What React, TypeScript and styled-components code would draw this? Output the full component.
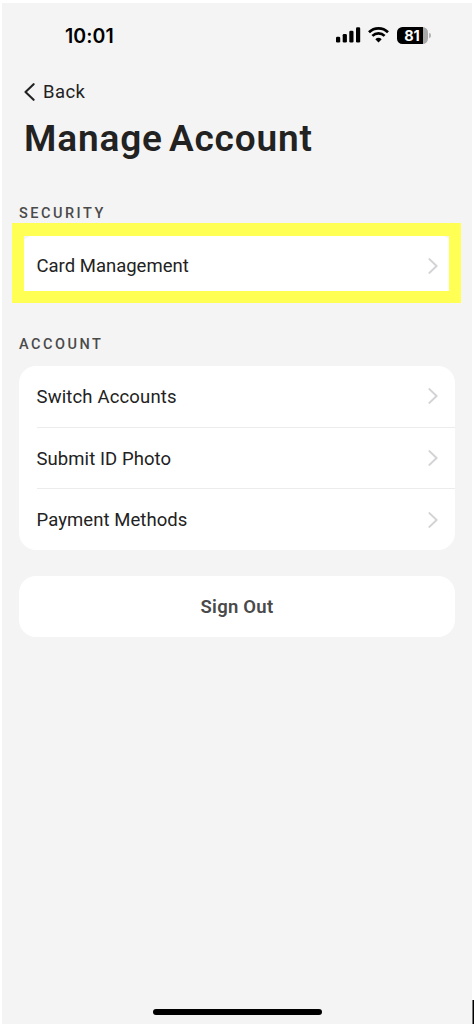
import React from 'react';
import styled, { createGlobalStyle } from 'styled-components';

const GlobalStyle = createGlobalStyle`
  * { box-sizing: border-box; }
  body { margin: 0; background: #fff; font-family: Roboto, "Liberation Sans", sans-serif; }
  button, h1, h2 { margin: 0; font: inherit; }
`;

const Page = styled.div`
  height: 1024px;
  padding: 3px 2px 0;
  background: #fff;
  position: relative;
  overflow: hidden;
`;

const Screen = styled.main`
  height: 1021px;
  background: #f4f4f4;
  display: flex;
  flex-direction: column;
`;

const StatusBar = styled.header`
  height: 64px;
  padding: 0 41px 0 63px;
  display: flex;
  align-items: center;
  justify-content: space-between;
  color: #000;
`;

const Time = styled.time`
  font: 600 19.5px/24px Inter, sans-serif;
  letter-spacing: 0.05px;
  padding-top: 1px;
`;

const StatusIcons = styled.div`
  display: flex;
  align-items: center;
`;

const Battery = styled.div`
  display: flex;
  align-items: center;
  margin-left: 8px;
`;

const BatteryBody = styled.div`
  width: 31px;
  height: 17px;
  padding-right: 1px;
  border-radius: 5.5px;
  background: linear-gradient(to right, #000 25.5px, #a9a9a9 25.5px);
  color: #fff;
  font: 700 14.5px/17px Inter, sans-serif;
  text-align: center;
`;

const BatteryTip = styled.div`
  width: 2px;
  height: 5px;
  margin-left: 1px;
  border-radius: 0 2px 2px 0;
  background: #b4b4b4;
`;

const BackButton = styled.button`
  align-self: flex-start;
  height: 30px;
  margin-top: 10px;
  padding: 0 0 0 22px;
  border: 0;
  background: none;
  display: flex;
  align-items: center;
  gap: 8px;
  color: #222;
  font-size: 18.5px;
  letter-spacing: 0.45px;
`;

const Title = styled.h1`
  height: 44px;
  margin-top: 10px;
  padding-left: 22px;
  color: #222;
  font-size: 37px;
  font-weight: 600;
  line-height: 44px;
  letter-spacing: 0.85px;
  word-spacing: -4px;
  white-space: nowrap;
`;

const Section = styled.section<{ $top: number }>`
  margin: ${({ $top }) => $top}px 17px 0;
`;

const SectionTitle = styled.h2`
  height: 20px;
  color: #4a4a4a;
  font-size: 14.5px;
  font-weight: 500;
  line-height: 20px;
  letter-spacing: 2.5px;
`;

const Card = styled.div`
  position: relative;
  margin-top: 11px;
  border-radius: 17px;
  background: #fff;
`;

const Highlight = styled.div`
  position: absolute;
  inset: -12px -6px -7px -7.5px;
  border: 12.5px solid #ffff54;
  border-top-width: 13px;
  pointer-events: none;
`;

const Row = styled.div`
  height: 61.33px;
  padding: 0 17px 0 0;
  margin-left: 17.5px;
  display: flex;
  align-items: center;
  justify-content: space-between;
  color: #222;
  font-size: 18.5px;
  & + & { border-top: 1px solid #ececec; }
`;

const Label = styled.span<{ $spacing: number }>`
  padding-top: 1px;
  letter-spacing: ${({ $spacing }) => $spacing}px;
`;

const SignOut = styled.button`
  height: 61.5px;
  margin: 26px 17px 0;
  padding: 1px 0 0;
  border: 0;
  border-radius: 17px;
  background: #fff;
  color: #4a4a4a;
  font-size: 18.5px;
  font-weight: 600;
  letter-spacing: 0.25px;
`;

const HomeIndicator = styled.div`
  width: 169px;
  height: 6px;
  margin: auto auto 9px;
  border-radius: 3px;
  background: #000;
`;

const EdgeMark = styled.div`
  position: absolute;
  right: 0;
  bottom: 0;
  width: 2px;
  height: 24px;
  background: linear-gradient(to right, #777 1px, #000 1px);
`;

const Chevron = () => (
  <svg width="10" height="16" viewBox="0 0 10 16" fill="none" stroke="#d3d3d6" strokeWidth="2" strokeLinecap="round" strokeLinejoin="round">
    <path d="M1.4 1.1 8.6 8 1.4 14.9" />
  </svg>
);

const Signal = () => (
  <svg width="25" height="16" viewBox="0 0 25 16">
    <rect x="0" y="9.8" width="4.2" height="5.7" rx="1.3" />
    <rect x="6.7" y="7" width="4.2" height="8.5" rx="1.3" />
    <rect x="13.3" y="3.8" width="4.2" height="11.7" rx="1.3" />
    <rect x="20" y="0.3" width="4.2" height="15.2" rx="1.3" />
  </svg>
);

const WifiIcon = styled.svg`
  margin-left: 7px;
`;

const Wifi = () => (
  <WifiIcon width="21" height="16" viewBox="0 0 21 16" fill="none" stroke="#000" strokeWidth="2.7">
    <path d="M1 5.3a13.6 13.6 0 0 1 19 0" />
    <path d="M4.4 8.9a8.8 8.8 0 0 1 12.2 0" />
    <path d="M10.5 15.5 7.3 12.3a4.7 4.7 0 0 1 6.4 0z" fill="#000" stroke="none" />
  </WifiIcon>
);

const accountRows = [
  { label: 'Switch Accounts', spacing: 0.15 },
  { label: 'Submit ID Photo', spacing: 0.07 },
  { label: 'Payment Methods', spacing: 0.07 },
];

export default function App() {
  return (
    <Page>
      <GlobalStyle />
      <Screen>
        <StatusBar>
          <Time>10:01</Time>
          <StatusIcons>
            <Signal />
            <Wifi />
            <Battery>
              <BatteryBody>81</BatteryBody>
              <BatteryTip />
            </Battery>
          </StatusIcons>
        </StatusBar>
        <BackButton>
          <svg width="11" height="18" viewBox="0 0 11 18" fill="none" stroke="#222" strokeWidth="2.1" strokeLinecap="round" strokeLinejoin="round">
            <path d="M9.6 1.2 1.5 9l8.1 7.8" />
          </svg>
          Back
        </BackButton>
        <Title>Manage Account</Title>
        <Section $top={43}>
          <SectionTitle>SECURITY</SectionTitle>
          <Card>
            <Row>
              <Label $spacing={0}>Card Management</Label>
              <Chevron />
            </Row>
            <Highlight />
          </Card>
        </Section>
        <Section $top={38.5}>
          <SectionTitle>ACCOUNT</SectionTitle>
          <Card>
            {accountRows.map(({ label, spacing }) => (
              <Row key={label}>
                <Label $spacing={spacing}>{label}</Label>
                <Chevron />
              </Row>
            ))}
          </Card>
        </Section>
        <SignOut>Sign Out</SignOut>
        <HomeIndicator />
      </Screen>
      <EdgeMark />
    </Page>
  );
}
